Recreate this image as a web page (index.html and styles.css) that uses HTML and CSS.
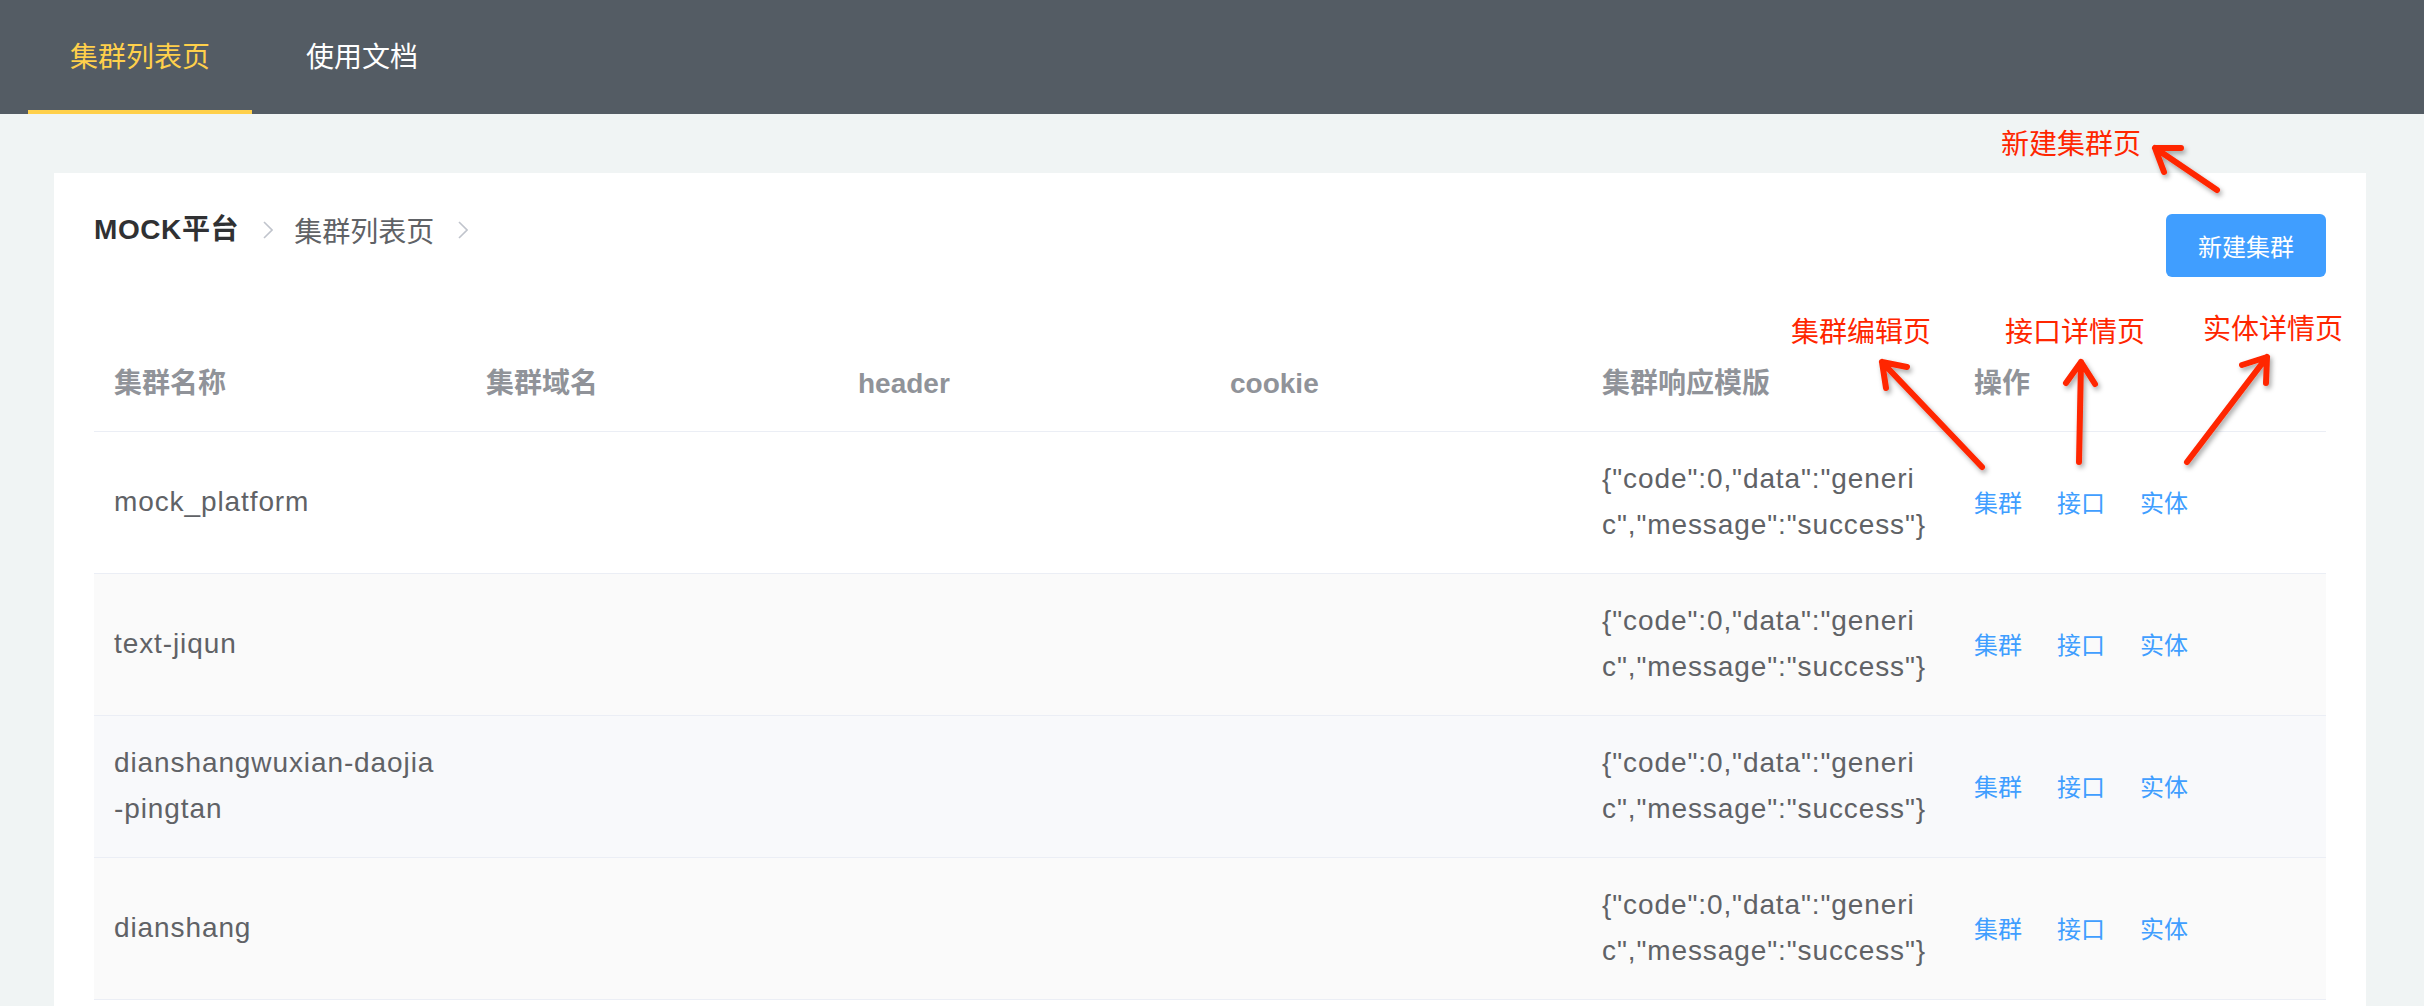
FILE: index.html
```html
<!DOCTYPE html>
<html lang="zh-CN">
<head>
<meta charset="utf-8">
<title>集群列表页</title>
<link rel="stylesheet" href="styles.css">
</head>
<body>
<header class="nav">
  <a class="nav-item active">集群列表页</a>
  <a class="nav-item">使用文档</a>
</header>

<main class="page">
  <section class="card">
    <div class="topbar">
      <nav class="crumbs">
        <span class="crumb strong">MOCK平台</span>
        <svg class="sep" width="10" height="20" viewBox="0 0 10 20"><polyline points="1,2 9,10 1,18" fill="none" stroke="#c0c4cc" stroke-width="1.6"/></svg>
        <span class="crumb">集群列表页</span>
        <svg class="sep" width="10" height="20" viewBox="0 0 10 20"><polyline points="1,2 9,10 1,18" fill="none" stroke="#c0c4cc" stroke-width="1.6"/></svg>
      </nav>
      <button class="btn-primary">新建集群</button>
    </div>

    <table class="grid">
      <thead>
        <tr>
          <th>集群名称</th>
          <th>集群域名</th>
          <th>header</th>
          <th>cookie</th>
          <th>集群响应模版</th>
          <th>操作</th>
        </tr>
      </thead>
      <tbody>
        <tr>
          <td>mock_platform</td><td></td><td></td><td></td>
          <td class="json">{"code":0,"data":"generi<br>c","message":"success"}</td>
          <td class="ops"><a>集群</a><a>接口</a><a>实体</a></td>
        </tr>
        <tr class="alt">
          <td>text-jiqun</td><td></td><td></td><td></td>
          <td class="json">{"code":0,"data":"generi<br>c","message":"success"}</td>
          <td class="ops"><a>集群</a><a>接口</a><a>实体</a></td>
        </tr>
        <tr class="hover">
          <td>dianshangwuxian-daojia<br>-pingtan</td><td></td><td></td><td></td>
          <td class="json">{"code":0,"data":"generi<br>c","message":"success"}</td>
          <td class="ops"><a>集群</a><a>接口</a><a>实体</a></td>
        </tr>
        <tr class="alt">
          <td>dianshang</td><td></td><td></td><td></td>
          <td class="json">{"code":0,"data":"generi<br>c","message":"success"}</td>
          <td class="ops"><a>集群</a><a>接口</a><a>实体</a></td>
        </tr>
      </tbody>
    </table>
  </section>
</main>

<div class="notes">
  <svg class="arrows" width="2424" height="1006" viewBox="0 0 2424 1006">
    <defs>
      <filter id="sh" x="-20%" y="-20%" width="140%" height="140%">
        <feDropShadow dx="2" dy="3" stdDeviation="2.5" flood-color="#000" flood-opacity="0.35"/>
      </filter>
    </defs>
    <g fill="none" stroke="#ff2600" stroke-width="6" stroke-linecap="round" stroke-linejoin="round" filter="url(#sh)">
      <path d="M2217 190 L2155 148 M2164 172 L2155 148 L2181 148"/>
      <path d="M1982 467 L1882 362 M1886 388 L1882 362 L1907 367"/>
      <path d="M2079 462 L2081 362 M2066 383 L2081 362 L2095 384"/>
      <path d="M2187 462 L2267 357 M2242 365 L2267 357 L2266 383"/>
    </g>
  </svg>
  <span class="note n-new">新建集群页</span>
  <span class="note n-edit">集群编辑页</span>
  <span class="note n-api">接口详情页</span>
  <span class="note n-ent">实体详情页</span>
</div>
</body>
</html>
```

FILE: styles.css
```css
* { box-sizing: border-box; }

html, body {
  margin: 0;
  padding: 0;
}

body {
  position: relative;
  width: 2424px;
  height: 1006px;
  overflow: hidden;
  background: #f0f4f4;
  font-family: "Liberation Sans", "Noto Sans CJK SC", sans-serif;
  color: #606266;
}

.nav {
  display: flex;
  gap: 12px;
  height: 114px;
  padding-left: 28px;
  background: #545c64;
}

.nav-item {
  display: block;
  height: 114px;
  padding: 0 42px;
  line-height: 110px;
  font-family: "Noto Sans CJK SC", sans-serif;
  font-size: 28px;
  color: #ffffff;
  border-bottom: 4px solid transparent;
}

.nav-item.active {
  color: #ffd04b;
  border-bottom-color: #ffd04b;
}

.page {
  padding: 59px 58px 0 54px;
}

.card {
  background: #ffffff;
  padding: 40px 40px 0;
  min-height: 900px;
}

.topbar {
  display: flex;
  justify-content: space-between;
  align-items: flex-start;
  height: 64px;
}

.crumbs {
  display: flex;
  align-items: center;
  height: 28px;
  margin-top: 3px;
  font-size: 28px;
  line-height: 28px;
  font-family: "Noto Sans CJK SC", sans-serif;
}

.crumb { color: #606266; }
.crumb.strong {
  color: #303133;
  font-weight: 700;
  letter-spacing: 0.6px;
  font-family: "Liberation Sans", "Noto Sans CJK SC", sans-serif;
}

.sep {
  display: block;
  margin: 0 21px 0 24px;
}

.btn-primary {
  margin-top: 1px;
  height: 63px;
  padding: 0 32px;
  border: 0;
  border-radius: 6px;
  background: #409eff;
  color: #ffffff;
  font-family: "Noto Sans CJK SC", sans-serif;
  font-size: 24px;
}

.grid {
  width: 100%;
  margin-top: 60px;
  table-layout: fixed;
  border-collapse: collapse;
}

.grid th {
  padding: 24px 20px;
  line-height: 46px;
  text-align: left;
  font-family: "Liberation Sans", "Noto Sans CJK SC", sans-serif;
  font-size: 28px;
  font-weight: 700;
  color: #909399;
  border-bottom: 1px solid #ebeef5;
}

.grid td {
  padding: 24px 20px 25px;
  height: 142px;
  line-height: 46px;
  font-size: 28px;
  letter-spacing: 0.9px;
  color: #606266;
  vertical-align: middle;
  border-bottom: 1px solid #ebeef5;
  white-space: nowrap;
}

.grid tr.alt td { background: #fafafa; }
.grid tr.hover td { background: #f8f9fb; }

.ops a {
  font-family: "Noto Sans CJK SC", sans-serif;
  font-size: 24px;
  letter-spacing: 0;
  color: #409eff;
  margin-right: 35px;
}

.notes {
  position: absolute;
  left: 0;
  top: 0;
  width: 2424px;
  height: 1006px;
  pointer-events: none;
}

.arrows {
  position: absolute;
  left: 0;
  top: 0;
}

.note {
  position: absolute;
  font-family: "Noto Sans CJK SC", sans-serif;
  font-size: 28px;
  line-height: 28px;
  color: #ff2600;
  white-space: nowrap;
}

.n-new  { left: 2001px; top: 128px; }
.n-edit { left: 1791px; top: 316px; }
.n-api  { left: 2005px; top: 316px; }
.n-ent  { left: 2203px; top: 313px; }
```
